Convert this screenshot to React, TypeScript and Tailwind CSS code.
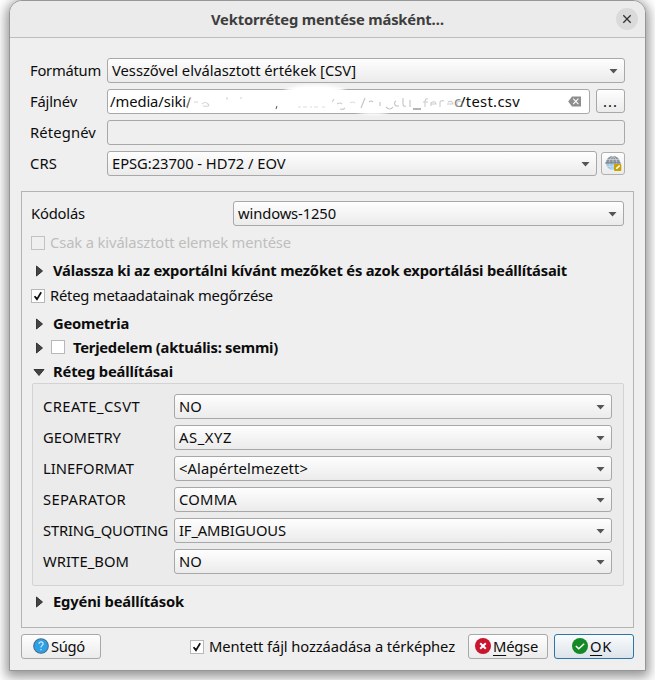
import { useLayoutEffect, useRef, type ReactNode } from "react";

// Text run whose tracking is adjusted so that it spans exactly `w` pixels.
function T({ w, children, className = "" }: { w: number; children: ReactNode; className?: string }) {
  const ref = useRef<HTMLSpanElement>(null);
  useLayoutEffect(() => {
    const el = ref.current;
    if (!el) return;
    el.style.letterSpacing = "0px";
    const n = (el.textContent ?? "").length;
    const natural = el.getBoundingClientRect().width;
    el.style.letterSpacing = `${(w - natural) / n}px`;
  }, [w]);
  return (
    <span ref={ref} className={`inline-block shrink-0 pb-[2px] whitespace-pre ${className}`}>
      {children}
    </span>
  );
}

function Combo({ text, w, className = "" }: { text: string; w: number; className?: string }) {
  return (
    <div
      className={`flex h-[25px] items-center justify-between rounded-[3px] border border-[#a8a8a8] bg-linear-to-b from-[#fefefe] to-[#ebebeb] pr-[6px] pl-1 ${className}`}
    >
      <T w={w}>{text}</T>
      <svg width="9" height="6" viewBox="0 0 9 6" className="shrink-0">
        <path d="M0.5 1h8L4.5 5.4z" fill="#555" />
      </svg>
    </div>
  );
}

function Check({ checked = false, disabled = false }: { checked?: boolean; disabled?: boolean }) {
  return (
    <span
      className={`flex size-[14px] shrink-0 items-center justify-center border ${
        disabled ? "border-[#c2c2c2] bg-[#efefef]" : "border-[#b8b8b8] bg-white"
      }`}
    >
      {checked && (
        <svg width="12" height="12" viewBox="0 0 12 12">
          <path d="M2.6 6.2 5 9.3 9.2 2.2" fill="none" stroke="#111" strokeWidth="1.7" />
          <path d="M2.2 5.9 5 7.4V10.2z" fill="#111" />
        </svg>
      )}
    </span>
  );
}

function Arrow({ open = false }: { open?: boolean }) {
  return (
    <svg width="12" height="12" viewBox="0 0 12 12" className="shrink-0">
      <path
        d={open ? "M1 3.5h10L6 9.5z" : "M3.5 1v10l6-5z"}
        fill="#444"
        stroke="#2a2a2a"
        strokeWidth="0.9"
        strokeLinejoin="round"
      />
    </svg>
  );
}

function Section({ text, w, open, className = "h-6" }: { text: string; w: number; open?: boolean; className?: string }) {
  return (
    <div className={`flex items-center pl-[11px] font-bold ${className}`}>
      <Arrow open={open} />
      <span className="w-2 shrink-0" />
      <T w={w}>{text}</T>
    </div>
  );
}

const options = [
  { name: "CREATE_CSVT", nw: 97, value: "NO", vw: 23 },
  { name: "GEOMETRY", nw: 78, value: "AS_XYZ", vw: 53 },
  { name: "LINEFORMAT", nw: 91, value: "<Alapértelmezett>", vw: 129 },
  { name: "SEPARATOR", nw: 83, value: "COMMA", vw: 58 },
  { name: "STRING_QUOTING", nw: 125, value: "IF_AMBIGUOUS", vw: 107 },
  { name: "WRITE_BOM", nw: 86, value: "NO", vw: 23 },
];

const button =
  "flex h-[25px] w-20 items-center rounded-[3px] border border-[#a8a8a8] bg-linear-to-b from-[#fefefe] to-[#ebebeb]";

export default function App() {
  return (
    <div className="h-[680px] w-[655px] overflow-hidden bg-white pl-[9px] font-['Noto_Sans','Open_Sans',sans-serif] text-[14.75px] leading-[20px] text-[#0c0c0c]">
      <div className="flex h-[671px] w-[637px] flex-col rounded-t-[13px] border border-[#969696] bg-[#efefef] shadow-[0_3px_12px_3px_rgba(0,0,0,0.42)]">
        <header className="flex h-[37px] shrink-0 items-center rounded-t-[12px] border-b border-[#bdbdbd] bg-[#ebebeb] pr-[7px] pl-[201px] text-[#3d3d3d]">
          <T w={233} className="mt-[2px] font-bold">
            Vektorréteg mentése másként…
          </T>
          <span className="ml-auto flex size-[22px] items-center justify-center rounded-full bg-[#dadada]">
            <svg width="10" height="10" viewBox="0 0 10 10">
              <path d="m1.3 1.3 7.4 7.4m0-7.4L1.3 8.7" stroke="#333" strokeWidth="1.3" />
            </svg>
          </span>
        </header>

        <div className="grid shrink-0 grid-cols-[77px_518px] gap-y-[6px] pt-[20px] pl-5 [&>*]:h-[25px]">
          <div className="flex items-center"><T w={71}>Formátum</T></div>
          <Combo text="Vesszővel elválasztott értékek [CSV]" w={244} />

          <div className="flex items-center"><T w={47}>Fájlnév</T></div>
          <div className="flex gap-[6px]">
            <div className="relative flex h-[25px] w-[483px] items-center rounded-[3px] border border-[#a8a8a8] bg-white pl-[2px]">
              <T w={76}>/media/siki</T>
              <T w={5} className="text-[#777]">/</T>
              <span className="w-[269px]" />
              <T w={60}>/test.csv</T>
              <svg width="13" height="11" viewBox="0 0 13 11" className="mr-[8px] mb-px ml-auto">
                <path d="M4 .5h9v10H4L.2 5.5z" fill="#8e8e8e" />
                <path d="m5.2 2.7 5.2 5.4m0-5.4L5.2 8.1" stroke="#fff" strokeWidth="1.1" />
              </svg>
              {/* Wiped-out middle part of the path */}
              <svg width="290" height="34" viewBox="0 0 290 34" className="absolute -top-[7px] left-[72px]">
                <defs>
                  <filter id="soft" x="-20%" y="-50%" width="140%" height="200%">
                    <feGaussianBlur stdDeviation="1.4" />
                  </filter>
                  <filter id="trace">
                    <feGaussianBlur stdDeviation="0.5" />
                  </filter>
                </defs>
                <g filter="url(#soft)" fill="#fff">
                  <ellipse cx="135" cy="10" rx="32" ry="8" />
                  <ellipse cx="193" cy="27" rx="17" ry="4.5" />
                  <ellipse cx="18" cy="19" rx="9" ry="8" />
                </g>
                <g filter="url(#trace)" fill="none" stroke="#aaa" strokeWidth="1.1">
                  <path d="m10 15-3 10" stroke="#777" />
                  <path d="M14 19h4M22 21q3-3 6 0t-5 2M47 14v3M61 14v2" opacity=".5" />
                  <path d="m97 23-1 3" stroke="#666" />
                  <path d="M118 24h3m2 0h4m3 0h2m2 0h4m4 0h3" opacity=".4" />
                  <path d="m154 16-2 3M157 21q3-2 5 0M160 26q3 1 5-1" opacity=".6" />
                  <path d="M170 20q3-2 5 0" opacity=".4" />
                  <path d="m185 15-4 10M189 19q2-2 4 0M200 19v4M206 24q4 4 7 0" opacity=".7" />
                  <path d="M216 18q-3 2 0 5h3M223 15v6q0 3 3 2M230 17v7" opacity=".7" />
                  <path d="M233 26h8" stroke="#777" />
                  <path d="M248 16q-3-1-3 3v5m-2-5h5M251 21h5q-1-4-5-1v3M260 24v-5q1-2 4-1M267 21h6q-1-4-5-2M277 24v-5q5-2 5 1v4" opacity=".6" />
                </g>
              </svg>
              <span className="absolute top-px left-[346px] text-[#888]">c</span>
            </div>
            <div className="flex h-6 w-[29px] items-center justify-center rounded-[3px] border border-[#a8a8a8] bg-linear-to-b from-[#fefefe] to-[#ebebeb]">
              <T w={15} className="mt-[2px]">...</T>
            </div>
          </div>

          <div className="flex items-center"><T w={66}>Rétegnév</T></div>
          <div className="rounded-[3px] border border-[#a8a8a8] bg-[#efefef]" />

          <div className="flex items-center"><T w={27}>CRS</T></div>
          <div className="flex gap-1">
            <Combo text="EPSG:23700 - HD72 / EOV" w={173.5} className="w-[490px]" />
            <div className="mt-px flex h-[23px] w-6 items-center justify-center rounded-[3px] border border-[#b0b0b0] bg-linear-to-b from-[#fefefe] to-[#ebebeb]">
              <svg width="17" height="17" viewBox="0 0 17 17">
                <circle cx="8" cy="8" r="7" fill="#9cc8ec" />
                <path d="M1 8a7 7 0 0 1 14 0z" fill="#8d9499" />
                <path
                  d="M2 4.5h12M2 11.5h10M8 1v14M8 1C3 4 3 12 8 15M8 1c5 3 5 11 0 14"
                  fill="none"
                  stroke="#dce3e8"
                  strokeWidth=".6"
                />
                <path d="M0 8h16" stroke="#777" strokeWidth=".9" />
                <rect x="9" y="9" width="7.3" height="7" rx="1" fill="#c9a100" />
                <path d="m10.8 14.3.6-1.8 2.8-2.4 1 .9-2.7 2.7z" fill="#fff" />
              </svg>
            </div>
          </div>
        </div>

        <div className="mt-[15px] ml-[11px] h-[437px] w-[613px] shrink-0 border border-[#b4b4b4]">
          <div className="mt-[9px] flex h-[25px] items-center pl-[9px]">
            <T w={54}>Kódolás</T>
            <Combo text="windows-1250" w={98} className="ml-[148px] w-[391px]" />
          </div>
          <div className="mt-[7px] flex h-5 items-center gap-[5px] pl-[9px] text-[#bebebe]">
            <Check disabled />
            <T w={241} className="pb-0">Csak a kiválasztott elemek mentése</T>
          </div>
          <Section text="Válassza ki az exportálni kívánt mezőket és azok exportálási beállításait" w={514} className="mt-[6px] h-6" />
          <div className="mt-[3px] flex h-5 items-center gap-[5px] pl-[9px]">
            <Check checked />
            <T w={223} className="pb-0">Réteg metaadatainak megőrzése</T>
          </div>
          <Section text="Geometria" w={76} className="mt-[6px] h-6" />
          <div className="flex h-6 items-center pl-[11px] font-bold">
            <Arrow />
            <span className="mb-0.5 ml-[6px]">
              <Check />
            </span>
            <span className="w-2" />
            <T w={205}>Terjedelem (aktuális: semmi)</T>
          </div>
          <Section text="Réteg beállításai" w={120} open className="h-[23px]" />

          <div className="ml-[10px] flex h-[203px] w-[592px] flex-col gap-[6px] rounded-[2px] border border-[#d3d3d3] bg-[#ebebeb] pt-[10px] pl-[10px]">
            {options.map((o) => (
              <div key={o.name} className="flex h-[25px] items-center">
                <div className="flex w-[131px]">
                  <T w={o.nw}>{o.name}</T>
                </div>
                <Combo text={o.value} w={o.vw} className="w-[438px]" />
              </div>
            ))}
          </div>
          <Section text="Egyéni beállítások" w={131} className="mt-1 h-6" />
        </div>

        <footer className="mt-[6px] flex h-[25px] items-center pl-[11px]">
          <div className={`${button} gap-[2px] pl-[11px]`}>
            <svg width="16" height="16" viewBox="0 0 16 16" className="mb-px">
              <circle cx="8" cy="8" r="7.3" fill="#2f9fe6" stroke="#47708c" strokeWidth="1.1" />
              <path d="M5.9 5.9c.1-2.8 4.4-2.5 4.2 0C10 7.4 8 7.5 8 9.5M8 11v1.3" fill="none" stroke="#d8effd" strokeWidth="1.1" />
            </svg>
            <T w={34}>Súgó</T>
          </div>
          <div className="ml-[89px] flex items-center gap-[5px]">
            <Check checked />
            <T w={246}>Mentett fájl hozzáadása a térképhez</T>
          </div>
          <div className={`${button} ml-[13px] gap-[2px] pl-[6px]`}>
            <svg width="16" height="16" viewBox="0 0 16 16" className="mb-px">
              <circle cx="8" cy="8" r="8" fill="#c9152d" />
              <path d="m5.2 5.2 5.6 5.6m0-5.6-5.6 5.6" stroke="#fff" strokeWidth="2" />
            </svg>
            <T w={45}>
              <span className="underline underline-offset-[3px]">M</span>égse
            </T>
          </div>
          <div className="ml-[6px] flex h-[25px] w-20 items-center gap-[2px] rounded-[3px] border border-[#2b75a8] bg-linear-to-b from-[#fafcfd] to-[#dce3e9] pl-[17px]">
            <svg width="16" height="16" viewBox="0 0 16 16" className="mb-px">
              <circle cx="8" cy="8" r="8" fill="#138a26" />
              <path d="m3.8 8 3 2.8 5.4-5" fill="none" stroke="#fff" strokeWidth="1.5" />
            </svg>
            <T w={22}>
              <span className="underline underline-offset-[3px]">O</span>K
            </T>
          </div>
        </footer>
      </div>
    </div>
  );
}
